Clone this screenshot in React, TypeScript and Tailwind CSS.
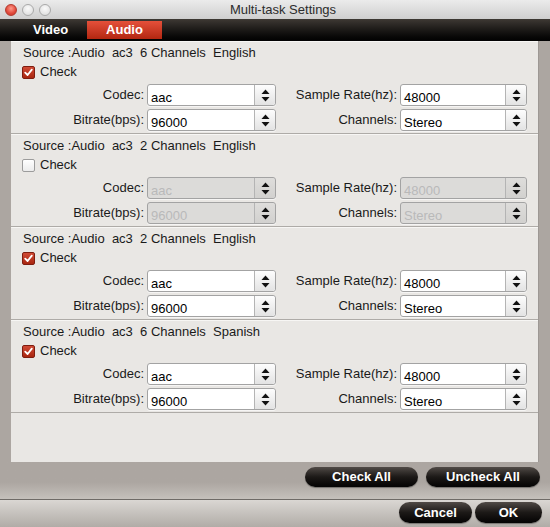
import React from 'react';

type Track = {
  source: string;
  checked: boolean;
};

const tracks: Track[] = [
  { source: 'Source :Audio  ac3  6 Channels  English', checked: true },
  { source: 'Source :Audio  ac3  2 Channels  English', checked: false },
  { source: 'Source :Audio  ac3  2 Channels  English', checked: true },
  { source: 'Source :Audio  ac3  6 Channels  Spanish', checked: true },
];

// up/down arrows for the popup buttons
const Stepper: React.FC = () => (
  <svg width="9" height="13" viewBox="0 0 9 13">
    <path d="M4.5 0.5 L8.5 5 L0.5 5 Z" fill="#111" />
    <path d="M4.5 12.5 L8.5 8 L0.5 8 Z" fill="#111" />
  </svg>
);

const Select: React.FC<{ value: string; width: string; disabled?: boolean }> = ({ value, width, disabled }) => (
  <div
    className={`flex h-[22px] ${width} rounded-[3px] border border-[#a3a3a3] shadow-[0_1px_0_rgba(255,255,255,0.6)] ${
      disabled ? 'bg-[#dcdbd9]' : 'bg-white'
    }`}
  >
    <div className={`flex-1 pl-[3px] pt-[4px] text-[13px] leading-[17px] ${disabled ? 'text-[#b9b9b9]' : 'text-black'}`}>
      {value}
    </div>
    <div
      className={`flex w-[21px] items-center justify-center border-l border-[#b4b4b4] rounded-r-[3px] ${
        disabled ? 'bg-linear-to-b from-[#dedddb] to-[#d2d1cf]' : 'bg-linear-to-b from-[#fdfdfd] to-[#e3e3e3]'
      }`}
    >
      <Stepper />
    </div>
  </div>
);

const Checkbox: React.FC<{ checked: boolean }> = ({ checked }) =>
  checked ? (
    <div className="flex h-[13px] w-[13px] items-center justify-center rounded-[2px] border border-[#7e1d10] bg-linear-to-b from-[#d04a35] to-[#a9260f]">
      <svg width="9" height="9" viewBox="0 0 9 9">
        <path d="M1.2 4.6 L3.6 7 L7.8 1.6" stroke="#fff" strokeWidth="1.8" fill="none" strokeLinecap="round" strokeLinejoin="round" />
      </svg>
    </div>
  ) : (
    <div className="h-[13px] w-[13px] rounded-[2px] border border-[#9c9c9c] bg-linear-to-b from-[#ffffff] to-[#ececec]" />
  );

const TrackRow: React.FC<{ track: Track }> = ({ track }) => {
  const off = !track.checked;
  return (
    <div className="h-[93px] border-b border-[#aeaba7] pt-[4px] shadow-[inset_0_1px_0_#f7f6f4]">
      <div className="pl-[12px] text-[13px] leading-[16px] whitespace-pre text-[#1a1a1a]">{track.source}</div>
      <div className="mt-[3px] flex h-[16px] items-center gap-[5px] pl-[11px]">
        <Checkbox checked={track.checked} />
        <span className="text-[13px] leading-[16px] text-[#1a1a1a]">Check</span>
      </div>
      <div className="mt-[4px] flex flex-col gap-[3px]">
        <div className="flex items-center">
          <div className="w-[136px] pr-[3px] text-right text-[13px] text-[#1a1a1a]">Codec:</div>
          <Select value="aac" width="w-[129px]" disabled={off} />
          <div className="w-[124px] pr-[3px] text-right text-[13px] text-[#1a1a1a]">Sample Rate(hz):</div>
          <Select value="48000" width="w-[127px]" disabled={off} />
        </div>
        <div className="flex items-center">
          <div className="w-[136px] pr-[3px] text-right text-[13px] text-[#1a1a1a]">Bitrate(bps):</div>
          <Select value="96000" width="w-[129px]" disabled={off} />
          <div className="w-[124px] pr-[3px] text-right text-[13px] text-[#1a1a1a]">Channels:</div>
          <Select value="Stereo" width="w-[127px]" disabled={off} />
        </div>
      </div>
    </div>
  );
};

const PillButton: React.FC<{ label: string; width: string; height: string }> = ({ label, width, height }) => (
  <button
    className={`${width} ${height} rounded-full bg-linear-to-b from-[#514b47] via-[#1c1917] to-[#050404] text-[13px] font-bold text-white shadow-[0_1px_1px_rgba(0,0,0,0.35)]`}
  >
    {label}
  </button>
);

const App: React.FC = () => {
  return (
    <div className="flex h-[527px] w-[550px] flex-col overflow-hidden bg-[#aca6a1] font-['Liberation_Sans',Arial,sans-serif]">
      {/* title bar */}
      <div className="grid h-[19px] grid-cols-[1fr_auto_1fr] items-center bg-linear-to-b from-[#ebebeb] to-[#cfcfcf]">
        <div className="flex items-center gap-[5px] pl-[5px]">
          <div className="h-[12px] w-[12px] rounded-full border border-[#b33a2e] bg-[radial-gradient(circle_at_50%_35%,#ff9a8a,#e0483a_60%,#c5372b)]" />
          <div className="h-[12px] w-[12px] rounded-full border border-[#a9a9a9] bg-[radial-gradient(circle_at_50%_35%,#fafafa,#d9d9d9)]" />
          <div className="h-[12px] w-[12px] rounded-full border border-[#a9a9a9] bg-[radial-gradient(circle_at_50%_35%,#fafafa,#d9d9d9)]" />
        </div>
        <div className="pl-[16px] text-[13px] leading-[16px] text-[#2c2c2c]">Multi-task Settings</div>
        <div />
      </div>

      {/* tabs */}
      <div className="flex h-[22px] items-start bg-linear-to-b from-[#3e3934] to-[#020202] pl-[13px]">
        <div className="mt-[2px] flex h-[18px] w-[74px] items-center pl-[20px] text-[13px] font-bold text-white">Video</div>
        <div className="mt-[2px] flex h-[18px] w-[75px] items-center justify-center bg-linear-to-b from-[#e5503a] to-[#b3260f] text-[13px] font-bold text-white">
          Audio
        </div>
      </div>

      {/* track list */}
      <div className="mx-[11px] h-[421px] border-r border-[#9d9894] bg-[#e9e7e4]">
        {tracks.map((t, i) => (
          <TrackRow key={i} track={t} />
        ))}
      </div>

      {/* list actions */}
      <div className="flex h-[37px] items-start justify-end gap-[8px] bg-linear-to-b from-[#aca6a1] from-55% to-[#c5c1bc] pr-[10px] pt-[5px]">
        <PillButton label="Check All" width="w-[113px]" height="h-[20px]" />
        <PillButton label="Uncheck All" width="w-[114px]" height="h-[20px]" />
      </div>

      {/* dialog buttons */}
      <div className="flex flex-1 items-start justify-end gap-[3px] border-t border-[#6f6b67] bg-linear-to-b from-[#dad7d3] to-[#b1aca7] pr-[8px] pt-[2px]">
        <PillButton label="Cancel" width="w-[73px]" height="h-[21px]" />
        <PillButton label="OK" width="w-[67px]" height="h-[21px]" />
      </div>
    </div>
  );
};

export default App;
